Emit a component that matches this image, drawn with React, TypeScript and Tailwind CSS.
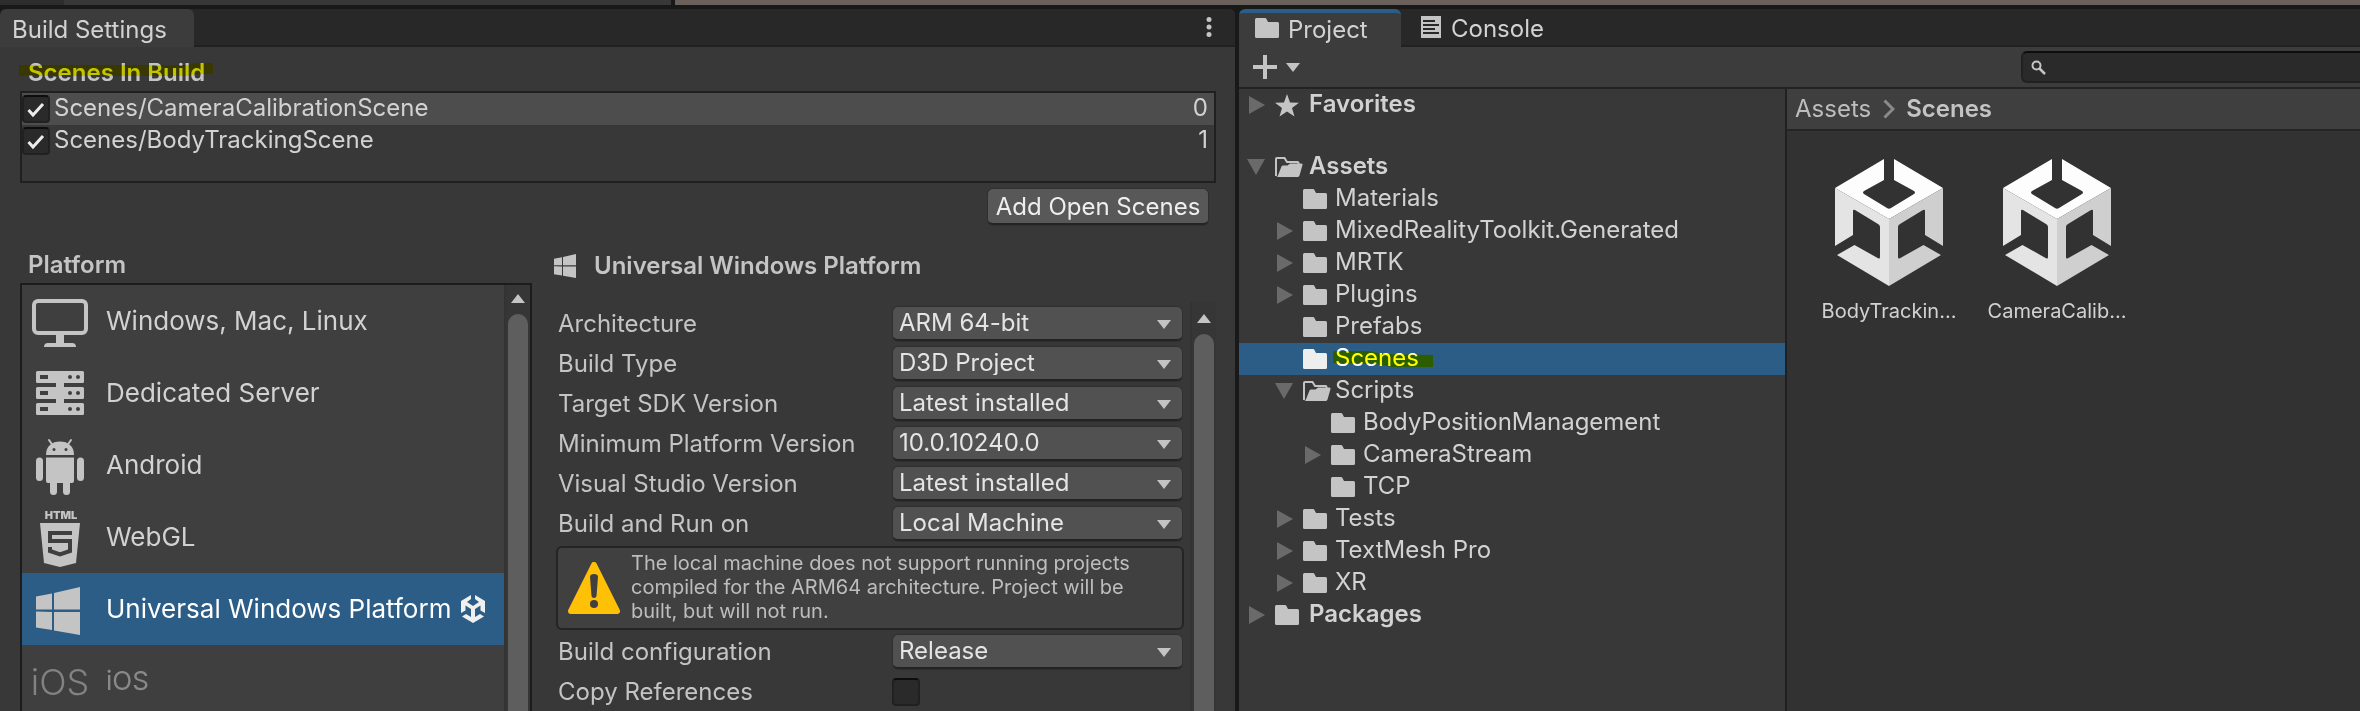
import type { ReactNode } from "react";

function UnityCube({ className }: { className: string }) {
  return (
    <svg viewBox="0 0 108 127" className={className} aria-hidden="true">
      <path fill="#fdfdfd" d="M49 0V21L29 32Q27 33.500 29 35L52 49Q54 50.500 56 49L79 35Q81 33.500 79 32L59 21V0L108 29L54 60L0 29Z" />
      <path fill="#e4e4e4" d="M0 29L54 60V127L2 96L19.500 86L43.500 99.500Q45 100 45 98V68Q45 66 43 65L20 51Q18 50 18 52V76L0 87Z" />
      <path fill="#cfcfcf" d="M108 29L54 60V127L106 96L88.500 86L64.500 99.500Q63 100 63 98V68Q63 66 65 65L88 51Q90 50 90 52V76L108 87Z" />
    </svg>
  );
}

function UnityBadge({ className }: { className: string }) {
  return (
    <svg viewBox="0 0 24 28" className={className} aria-hidden="true">
      <path
        fill="#f0f0f0"
        d="M10 0V4L6 7L12 11L18 7L14 4V0L24 6V18L19.500 15.500V10.500L14 14V22L19 19L23 21.500L12 28L1 21.500L5 19L10 22V14L4.500 10.500V15.500L0 18V6Z"
      />
    </svg>
  );
}

function WindowsPanes() {
  return (
    <path
      fill="currentColor"
      d="M4 23.500L20 20.500V36.500H4ZM22 20L48 14V36.500H22ZM4 38.500L20 39V57L4 54.500ZM22 39H48V62L22 57.500Z"
    />
  );
}

function PlatformIcon({ children }: { children: ReactNode }) {
  return (
    <svg viewBox="0 0 56 72" className="h-[72px] w-14 shrink-0 overflow-visible text-[#c4c4c4]" aria-hidden="true">
      {children}
    </svg>
  );
}

const platforms: { name: string; icon: ReactNode; disabled?: boolean; current?: boolean }[] = [
  {
    name: "Windows, Mac, Linux",
    icon: (
      <>
        <rect x="2" y="16" width="52" height="32" rx="4" fill="none" stroke="currentColor" strokeWidth="4" />
        <path fill="currentColor" d="M24 49H32V58H40Q44 58 44 62H12Q12 58 16 58H24Z" />
      </>
    ),
  },
  {
    name: "Dedicated Server",
    icon: (
      <>
        <path fill="currentColor" d="M24 24H32V48H24Z" />
        {[14, 30, 46].map((y) => (
          <g key={y}>
            <rect x="4" y={y} width="48" height="12" rx="1.500" fill="currentColor" />
            <rect x="8" y={y + 4} width="8" height="4" fill="#3f3f3f" />
            <circle cx="38" cy={y + 6} r="2" fill="#3f3f3f" />
            <circle cx="46" cy={y + 6} r="2" fill="#3f3f3f" />
          </g>
        ))}
      </>
    ),
  },
  {
    name: "Android",
    icon: (
      <>
        <path d="M17 11L20.500 16M39 11L35.500 16" stroke="currentColor" strokeWidth="2" strokeLinecap="round" />
        <path fill="currentColor" d="M14 26C14 17 20 12.500 28 12.500S42 17 42 26Z" />
        <circle cx="22" cy="20.500" r="1.500" fill="#3f3f3f" />
        <circle cx="34" cy="20.500" r="1.500" fill="#3f3f3f" />
        <path fill="currentColor" d="M14 28.500H42V52Q42 54 40 54H38V62.500A3.500 3.500 0 0 1 31 62.500V54H25V62.500A3.500 3.500 0 0 1 18 62.500V54H16Q14 54 14 52Z" />
        <rect x="4" y="28.500" width="7" height="23.500" rx="3.500" fill="currentColor" />
        <rect x="45" y="28.500" width="7" height="23.500" rx="3.500" fill="currentColor" />
      </>
    ),
  },
  {
    name: "WebGL",
    icon: (
      <>
        <text x="29" y="18" textAnchor="middle" fill="currentColor" className="text-[11px] font-black">
          HTML
        </text>
        <path fill="currentColor" d="M8 22H48L44 62L28 66L12 62Z" />
        <path d="M40 32H18V40H38V50L28 53.500L18 50V46" fill="none" stroke="#3f3f3f" strokeWidth="4" />
      </>
    ),
  },
  { name: "Universal Windows Platform", icon: <WindowsPanes />, current: true },
  {
    name: "iOS",
    disabled: true,
    icon: (
      <text x="28" y="50" textAnchor="middle" fill="currentColor" className="text-[36px] font-light">
        iOS
      </text>
    ),
  },
];

function Folder({ className = "text-[#c4c4c4]" }: { className?: string }) {
  return (
    <svg viewBox="0 0 24 20" className={`h-5 w-6 shrink-0 ${className}`} aria-hidden="true">
      <path fill="currentColor" d="M1.500 0H10Q11 0 11.500 1L13 4H22.500Q24 4 24 5.500V18.500Q24 20 22.500 20H1.500Q0 20 0 18.500V1.500Q0 0 1.500 0Z" />
    </svg>
  );
}

function OpenFolder() {
  return (
    <svg viewBox="0 0 28 20" className="-mr-1 h-5 w-7 shrink-0 text-[#c4c4c4]" aria-hidden="true">
      <path d="M1 19V2Q1 1 2 1H9.500L12 5H22.500Q23.500 5 23.500 6V8" fill="none" stroke="currentColor" strokeWidth="2" />
      <path fill="currentColor" d="M2.500 19.500L6.500 9.500Q7 8.500 8 8.500H12.500L15 6.500H26.500Q28 6.500 27.500 8L24.500 18.500Q24 20 22.500 20H1Z" />
    </svg>
  );
}

function Caret({ className = "" }: { className?: string }) {
  return (
    <svg viewBox="0 0 14 9" className={`h-[9px] w-3.5 shrink-0 fill-[#c4c4c4] ${className}`} aria-hidden="true">
      <path d="M0 0H14L7 9Z" />
    </svg>
  );
}

function Check({ id, checked }: { id: string; checked?: boolean }) {
  return (
    <span className="grid shrink-0">
      <input
        id={id}
        type="checkbox"
        defaultChecked={checked}
        className="peer col-start-1 row-start-1 size-7 appearance-none rounded-[4px] border-2 border-[#212121] border-t-[#0d0d0d] bg-[#2a2a2a]"
      />
      <svg viewBox="0 0 28 28" className="pointer-events-none invisible col-start-1 row-start-1 size-7 peer-checked:visible" aria-hidden="true">
        <path d="M6.500 15L11 20L21 9" fill="none" stroke="#ececec" strokeWidth="3" />
      </svg>
    </span>
  );
}

function SceneRow({ name, index, selected }: { name: string; index: number; selected?: boolean }) {
  const id = `scene-${index}`;
  return (
    <li className={`flex h-8 items-center ${selected ? "bg-[#4d4d4d]" : ""}`}>
      <Check id={id} checked />
      <label htmlFor={id} className="flex-1 pb-0.5 pl-1 leading-7">
        {name}
      </label>
      <span className="pr-1.5 pb-0.5 leading-7">{index}</span>
    </li>
  );
}

function Dropdown({ id, label, value }: { id: string; label: string; value: string }) {
  return (
    <div className="flex h-10 items-center">
      <label htmlFor={id} className="w-[335px] shrink-0 text-[#c4c4c4]">
        {label}
      </label>
      <span className="grid flex-1 items-center">
        <select
          id={id}
          className="col-start-1 row-start-1 h-[34px] w-full appearance-none rounded-[5px] border-b-2 border-[#242424] bg-[#515151] px-1.5 text-[#e4e4e4] shadow-[0_0_0_1px_#303030]"
        >
          <option>{value}</option>
        </select>
        <Caret className="pointer-events-none col-start-1 row-start-1 mr-[11px] justify-self-end" />
      </span>
    </div>
  );
}

function ScrollBar({ className }: { className: string }) {
  return (
    <div className={`flex w-[26px] shrink-0 flex-col items-center border-l-2 border-[#333333] bg-[#363636] ${className}`}>
      <Caret className="rotate-180" />
      <div className="mt-[11px] w-5 flex-1 rounded-t-full bg-[#5e5e5e]" />
    </div>
  );
}

type Node = { name: string; depth: 0 | 1 | 2; arrow?: "right" | "down"; star?: boolean; selected?: boolean };

const favorites: Node = { name: "Favorites", depth: 0, arrow: "right", star: true };

const tree: Node[] = [
  { name: "Assets", depth: 0, arrow: "down" },
  { name: "Materials", depth: 1 },
  { name: "MixedRealityToolkit.Generated", depth: 1, arrow: "right" },
  { name: "MRTK", depth: 1, arrow: "right" },
  { name: "Plugins", depth: 1, arrow: "right" },
  { name: "Prefabs", depth: 1 },
  { name: "Scenes", depth: 1, selected: true },
  { name: "Scripts", depth: 1, arrow: "down" },
  { name: "BodyPositionManagement", depth: 2 },
  { name: "CameraStream", depth: 2, arrow: "right" },
  { name: "TCP", depth: 2 },
  { name: "Tests", depth: 1, arrow: "right" },
  { name: "TextMesh Pro", depth: 1, arrow: "right" },
  { name: "XR", depth: 1, arrow: "right" },
  { name: "Packages", depth: 0, arrow: "right" },
];

const indent = { 0: "pl-2", 1: "pl-9", 2: "pl-16" };

function TreeRow({ node }: { node: Node }) {
  return (
    <li
      className={`flex h-8 items-center ${indent[node.depth]} ${
        node.selected ? "bg-[#2c5d87] text-white" : "text-[#d2d2d2]"
      } ${node.depth === 0 ? "font-semibold" : ""}`}
    >
      <svg viewBox="0 0 18 18" className="mr-2.5 size-[18px] shrink-0 fill-[#6a6a6a]" aria-hidden="true">
        {node.arrow === "right" && <path d="M2 0L18 9L2 18Z" />}
        {node.arrow === "down" && <path d="M0 1H18L9 17Z" />}
      </svg>
      {node.star ? (
        <svg viewBox="0 0 24 24" className="size-6 shrink-0 fill-[#c4c4c4]" aria-hidden="true">
          <path d="M12 1L15 9.500L24 9.700L17 15L19.500 23.500L12 18.500L4.500 23.500L7 15L0 9.700L9 9.500Z" />
        </svg>
      ) : node.arrow === "down" ? (
        <OpenFolder />
      ) : (
        <Folder className={node.selected ? "text-[#eeeeee]" : "text-[#c4c4c4]"} />
      )}
      <button type="button" className={`relative h-8 pb-0.5 leading-[30px] ${node.depth === 0 ? "ml-2.5" : "ml-2"}`}>
        {node.name}
        {node.selected && (
          <svg viewBox="0 0 100 16" className="absolute top-2 -left-0.5 h-4 w-[100px] mix-blend-multiply" aria-hidden="true">
            <path fill="#ffff00" d="M0 0H36L50 3L100 4V16H60L42 13L0 12Z" />
          </svg>
        )}
      </button>
    </li>
  );
}

function BuildSettings() {
  return (
    <section className="flex min-w-0 flex-[1235_1_0%] flex-col overflow-hidden rounded-t-md bg-[#383838]">
      <header className="flex h-[38px] shrink-0 items-stretch bg-[#282828]">
        <h1 className="flex w-[194px] items-center rounded-t-md bg-[#3c3c3c] pt-1 pl-3 text-[#d2d2d2]">Build Settings</h1>
        <div className="flex flex-1 items-center justify-end border-b-2 border-[#212121] pr-[23px]">
          <button type="button" aria-label="Window menu">
            <svg viewBox="0 0 6 20" className="h-5 w-1.5 fill-[#c4c4c4]" aria-hidden="true">
              <circle cx="3" cy="2.500" r="2.500" />
              <circle cx="3" cy="10" r="2.500" />
              <circle cx="3" cy="17.500" r="2.500" />
            </svg>
          </button>
        </div>
      </header>

      <div className="flex shrink-0 flex-col pr-[19px] pl-5">
        <h2 className="relative mt-2.5 h-[34px] pl-2 leading-8 font-semibold text-[#c4c4c4]">
          Scenes In Build
          <svg viewBox="0 0 194 14" className="absolute top-1.5 -left-px h-3.5 w-[194px] mix-blend-multiply" aria-hidden="true">
            <path fill="#ffff00" d="M0 2H170L176 0H194V11H176L170 13H0Z" />
          </svg>
        </h2>
        <ul className="h-[92px] border-2 border-[#202020] text-[#d2d2d2]">
          <SceneRow name="Scenes/CameraCalibrationScene" index={0} selected />
          <SceneRow name="Scenes/BodyTrackingScene" index={1} />
        </ul>
        <button
          type="button"
          className="mt-1.5 mr-2 h-9 w-[220px] self-end rounded-[5px] border-b-2 border-[#242424] bg-[#585858] pt-0.5 text-[#eeeeee] shadow-[0_0_0_1px_#303030]"
        >
          Add Open Scenes
        </button>
      </div>

      <div className="mt-6 flex min-h-0 flex-1 pr-[19px] pl-5">
        <div className="flex w-[512px] shrink-0 flex-col">
          <h2 className="h-[34px] shrink-0 pl-2 leading-8 font-semibold text-[#c4c4c4]">Platform</h2>
          <div className="flex min-h-0 flex-1 border-2 border-b-0 border-[#1c1c1c] bg-[#3f3f3f]">
            <ul className="flex-1 overflow-hidden text-[26px]">
              {platforms.map((p) => (
                <li key={p.name}>
                  <button
                    type="button"
                    disabled={p.disabled}
                    className={`flex h-[72px] w-full items-center pl-2.5 text-left whitespace-nowrap ${
                      p.current ? "bg-[#2c5d87] text-white" : "text-[#d2d2d2]"
                    } ${p.disabled ? "opacity-50" : ""}`}
                  >
                    <PlatformIcon>{p.icon}</PlatformIcon>
                    <span className="pl-[18px]">{p.name}</span>
                    {p.current && <UnityBadge className="ml-2.5 h-7 w-6 shrink-0" />}
                  </button>
                </li>
              ))}
            </ul>
            <ScrollBar className="pt-[9px]" />
          </div>
        </div>

        <div className="flex min-w-0 flex-1 flex-col pl-6">
          <h2 className="flex h-[53px] shrink-0 items-start font-semibold text-[#c4c4c4]">
            <svg viewBox="4 14 44 48" className="mt-[5px] -ml-0.5 h-6 w-[22px]" aria-hidden="true">
              <WindowsPanes />
            </svg>
            <span className="pl-[18px] leading-[34px]">Universal Windows Platform</span>
          </h2>
          <div className="flex min-h-0 flex-1">
            <form className="min-w-0 flex-1 pt-0.5 pr-1.5">
              <div className="pr-0.5 pl-0.5">
                <Dropdown id="arch" label="Architecture" value="ARM 64-bit" />
                <Dropdown id="build-type" label="Build Type" value="D3D Project" />
                <Dropdown id="sdk" label="Target SDK Version" value="Latest installed" />
                <Dropdown id="min-version" label="Minimum Platform Version" value="10.0.10240.0" />
                <Dropdown id="vs" label="Visual Studio Version" value="Latest installed" />
                <Dropdown id="run-on" label="Build and Run on" value="Local Machine" />
              </div>
              <div className="my-0.5 flex h-[84px] items-center rounded-md border-2 border-[#242424] bg-[#404040] pl-2.5">
                <svg viewBox="0 0 52 52" className="size-[52px] shrink-0" aria-hidden="true">
                  <path d="M26 3L49 49H3Z" fill="#ffc107" stroke="#ffc107" strokeWidth="6" strokeLinejoin="round" />
                  <path d="M22 15Q22 12 26 12T30 15L28.500 34Q28 36 26 36T23.500 34Z" fill="#404040" />
                  <circle cx="26" cy="42" r="4" fill="#404040" />
                </svg>
                <p className="w-[520px] pb-0.5 pl-[11px] text-xl leading-6 text-[#bdbdbd]">
                  The local machine does not support running projects compiled for the ARM64 architecture. Project will be built, but will not run.
                </p>
              </div>
              <div className="pr-0.5 pl-0.5">
                <Dropdown id="config" label="Build configuration" value="Release" />
                <div className="flex h-10 items-center">
                  <label htmlFor="copy-refs" className="w-[334px] shrink-0 text-[#c4c4c4]">
                    Copy References
                  </label>
                  <Check id="copy-refs" />
                </div>
              </div>
            </form>
            <ScrollBar className="pt-3" />
          </div>
        </div>
      </div>
    </section>
  );
}

function SceneAsset({ name }: { name: string }) {
  return (
    <li className="flex w-36 flex-col items-center">
      <UnityCube className="h-[127px] w-[108px]" />
      <span className="mt-[13px] text-xl leading-6 text-[#d2d2d2]">{name}</span>
    </li>
  );
}

function Project() {
  return (
    <section className="flex min-w-0 flex-[1121_1_0%] flex-col overflow-hidden rounded-tl-md bg-[#383838]">
      <header className="flex h-[38px] shrink-0 bg-[#282828] text-[#d2d2d2]">
        <button type="button" className="flex w-[162px] items-center rounded-t-md border-t-4 border-[#2c5d87] bg-[#3c3c3c] pb-1 pl-4">
          <Folder />
          <span className="pt-1 pl-[9px]">Project</span>
        </button>
        <div className="flex flex-1 items-center border-b-2 border-[#212121] pl-5">
          <button type="button" className="flex items-center">
            <svg viewBox="0 0 20 22" className="h-[22px] w-5" aria-hidden="true">
              <path fill="#c4c4c4" d="M0 0H20V22H0Z" />
              <path d="M2 5H14M2 9H18M2 13H14M2 17H18" stroke="#282828" strokeWidth="2" />
            </svg>
            <span className="pt-1 pl-2.5">Console</span>
          </button>
        </div>
      </header>

      <div className="flex h-[42px] shrink-0 items-center border-b-2 border-[#232323] bg-[#3c3c3c] pl-3.5">
        <button type="button" aria-label="Create" className="flex items-center gap-[9px]">
          <svg viewBox="0 0 24 24" className="size-6" aria-hidden="true">
            <path d="M12 0V24M0 12H24" stroke="#c4c4c4" strokeWidth="4" />
          </svg>
          <Caret />
        </button>
        <label className="ml-auto flex h-8 w-[339px] items-center rounded-l-md border-2 border-r-0 border-[#212121] border-t-[#0d0d0d] bg-[#2a2a2a] pl-2">
          <svg viewBox="0 0 15 15" className="size-[15px]" aria-hidden="true">
            <circle cx="5.500" cy="5.500" r="4" fill="none" stroke="#c4c4c4" strokeWidth="2" />
            <path d="M8 8L14 14" stroke="#c4c4c4" strokeWidth="2.500" />
          </svg>
          <input type="search" aria-label="Search project" className="min-w-0 flex-1 bg-transparent pl-2 outline-none" />
        </label>
      </div>

      <div className="flex min-h-0 flex-1">
        <nav className="w-[548px] shrink-0 border-r-2 border-[#202020]">
          <ul>
            <TreeRow node={favorites} />
          </ul>
          <ul className="mt-[30px]">
            {tree.map((n) => (
              <TreeRow key={n.name} node={n} />
            ))}
          </ul>
        </nav>
        <div className="flex min-w-0 flex-1 flex-col bg-[#323232]">
          <div className="flex h-[42px] items-center border-b-2 border-[#252525] bg-[#3f3f3f] pl-2 text-[#bdbdbd]">
            <a href="#assets">Assets</a>
            <svg viewBox="0 0 12 20" className="mr-[11px] ml-3 h-5 w-3" aria-hidden="true">
              <path d="M1.500 1.500L10 10L1.500 18.500" fill="none" stroke="#8a8a8a" strokeWidth="3" />
            </svg>
            <a href="#scenes" className="font-semibold text-[#c4c4c4]">
              Scenes
            </a>
          </div>
          <ul className="flex gap-6 pt-7 pl-[30px]">
            <SceneAsset name="BodyTrackin..." />
            <SceneAsset name="CameraCalib..." />
          </ul>
        </div>
      </div>
    </section>
  );
}

export default function App() {
  return (
    <main className="flex h-screen flex-col overflow-hidden bg-[#191919] font-['Inter',sans-serif] text-2xl leading-none">
      <div className="flex h-[5px] shrink-0">
        <div className="w-16 bg-[#2d2d2d]" />
        <div className="w-[607px] bg-[#383838]" />
        <div className="ml-1 flex-1 bg-[#6a605c]" />
      </div>
      <div className="mt-1 flex min-h-0 flex-1 gap-1">
        <BuildSettings />
        <Project />
      </div>
    </main>
  );
}
